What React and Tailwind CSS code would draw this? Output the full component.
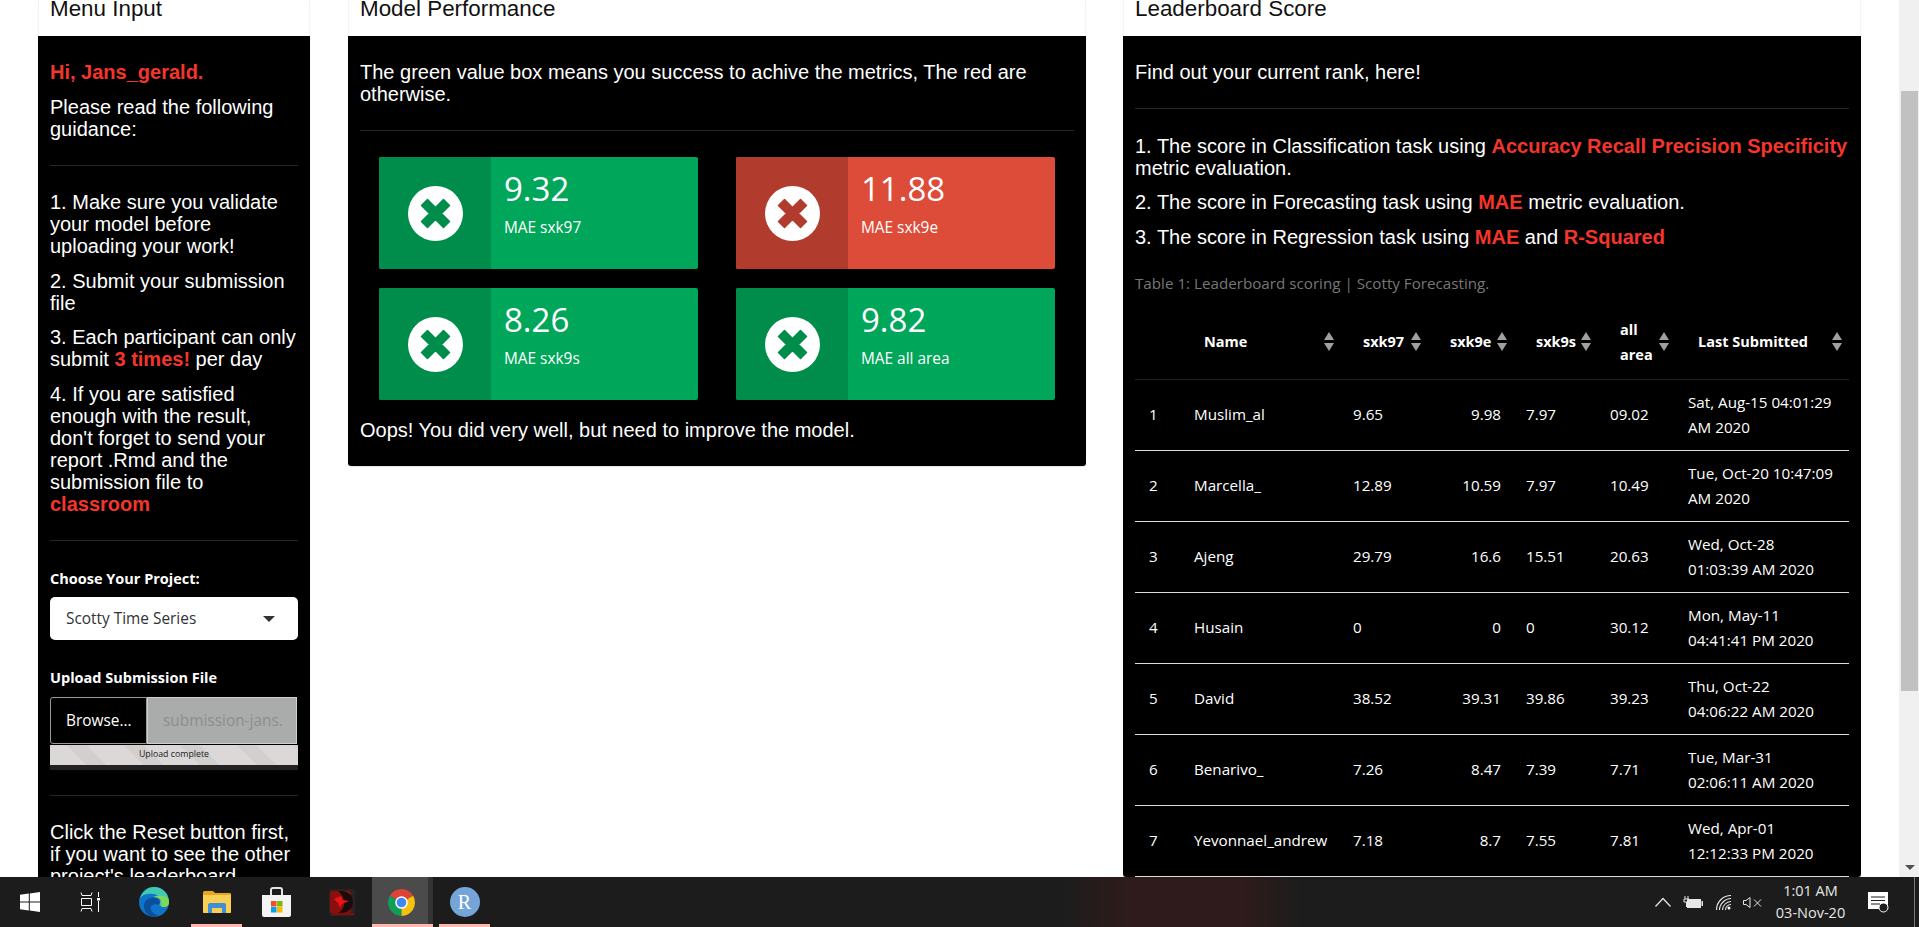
import React from "react";

const sans = "font-['Liberation_Sans',Arial,sans-serif]";
const open = "font-['Open_Sans',sans-serif]";

const rows = [
  ["1", "Muslim_al", "9.65", "9.98", "7.97", "09.02", "Sat, Aug-15 04:01:29", "AM 2020"],
  ["2", "Marcella_", "12.89", "10.59", "7.97", "10.49", "Tue, Oct-20 10:47:09", "AM 2020"],
  ["3", "Ajeng", "29.79", "16.6", "15.51", "20.63", "Wed, Oct-28", "01:03:39 AM 2020"],
  ["4", "Husain", "0", "0", "0", "30.12", "Mon, May-11", "04:41:41 PM 2020"],
  ["5", "David", "38.52", "39.31", "39.86", "39.23", "Thu, Oct-22", "04:06:22 AM 2020"],
  ["6", "Benarivo_", "7.26", "8.47", "7.39", "7.71", "Tue, Mar-31", "02:06:11 AM 2020"],
  ["7", "Yevonnael_andrew", "7.18", "8.7", "7.55", "7.81", "Wed, Apr-01", "12:12:33 PM 2020"],
];

function Red({ children }) {
  return <b className="font-bold text-[#f4352b]">{children}</b>;
}

function Divider({ className }) {
  return <hr className={`border-0 border-t border-[#262626] ${className}`} />;
}

function Panel({ title, className, children }) {
  return (
    <section className={`shrink-0 self-start rounded-b-[3px] shadow-[0_1px_1px_rgba(0,0,0,0.1)] ${className}`}>
      <div className={`h-9 overflow-hidden border-x border-[#f4f4f4] px-[11px] text-[22.4px] leading-[22px] text-[#111] ${sans}`}>
        <h3 className="-mt-[2px] font-normal">{title}</h3>
      </div>
      <div className={`rounded-b-[3px] bg-black px-3 pt-[25px] text-[20px] leading-[22px] text-white ${sans}`}>
        {children}
      </div>
    </section>
  );
}

function CrossIcon() {
  return (
    <svg viewBox="0 0 55 55" className="h-[55px] w-[55px]">
      <circle cx="27.5" cy="27.5" r="27.5" fill="#fff" />
      <path d="M19.5 13.5 27.5 21.5 35.5 13.5 41.5 19.5 33.5 27.5 41.5 35.5 35.5 41.5 27.5 33.5 19.5 41.5 13.5 35.5 21.5 27.5 13.5 19.5Z" fill="currentColor" stroke="currentColor" strokeWidth="1.5" strokeLinejoin="round" />
    </svg>
  );
}

function ValueBox({ value, label, red }) {
  return (
    <div className={`flex h-28 overflow-hidden rounded-[2px] text-white ${open} ${red ? "bg-[#dd4b39]" : "bg-[#00a65a]"}`}>
      <div className={`flex w-28 items-center justify-center ${red ? "bg-[#b13c2e] text-[#b13c2e]" : "bg-[#008d4c] text-[#008d4c]"}`}>
        <CrossIcon />
      </div>
      <div className="pl-[13px] pt-[14px]">
        <div className="text-[33px] leading-[36px]">{value}</div>
        <div className="mt-[11px] text-[15.4px] leading-5">{label}</div>
      </div>
    </div>
  );
}

function SortIcon() {
  return (
    <svg viewBox="0 0 10 19" className="h-[19px] w-[10px] shrink-0" fill="#a0a0a0">
      <path d="M5 0 10 8H0Z" />
      <path d="M5 19 0 11H10Z" />
    </svg>
  );
}

function Th({ children, last }) {
  return (
    <th className="p-0 font-bold">
      <div className={`flex items-center justify-between pl-[24px] text-left text-[14.5px] ${last ? "pr-[7px]" : "pr-[5px]"}`}>
        <span>{children}</span>
        <SortIcon />
      </div>
    </th>
  );
}

function LeftPanel() {
  return (
    <Panel title="Menu Input" className="w-[272px]">
      <p className="font-bold text-[#f4352b]">Hi, Jans_gerald.</p>
      <p className="mt-[13px]">Please read the following guidance:</p>
      <Divider className="mb-[25px] mt-[25px]" />
      <p>1. Make sure you validate your model before uploading your work!</p>
      <p className="mt-[13px]">2. Submit your submission file</p>
      <p className="mt-[12px]">3. Each participant can only submit <Red>3 times!</Red> per day</p>
      <p className="mt-[13px]">
        4. If you are satisfied enough with the result, don't forget to send your report .Rmd and the submission file to <Red>classroom</Red>
      </p>
      <Divider className="mb-[28px] mt-[25px]" />
      <label className={`block text-[14.5px] font-bold leading-5 ${open}`}>Choose Your Project:</label>
      <div className={`mt-[8px] flex h-[43px] items-center justify-between rounded-[5px] bg-white pl-[16px] pr-[23px] text-[15.4px] text-[#333] ${open}`}>
        <span>Scotty Time Series</span>
        <span className="h-0 w-0 border-x-[6px] border-t-[6px] border-x-transparent border-t-[#333]" />
      </div>
      <label className={`mt-[28px] block text-[14.5px] font-bold leading-5 ${open}`}>Upload Submission File</label>
      <div className={`mt-[9px] flex h-[47px] w-[247px] text-[15.4px] ${open}`}>
        <div className="flex w-[97px] items-center rounded-l-[3px] border border-[#9a9a9a] bg-black pl-[15px]">Browse...</div>
        <div className="flex min-w-0 flex-1 items-center overflow-hidden whitespace-nowrap border border-[#cfcfcf] bg-[#aaacab] pl-[15px] text-[#8d8d8d]">submission-jans.</div>
      </div>
      <div className="mt-px h-[25px] bg-[#222]">
        <div className={`h-5 bg-[#dcd8d8] bg-[repeating-linear-gradient(45deg,#dcd8d8_0,#dcd8d8_26px,#d3cfcf_26px,#d3cfcf_40px)] text-center text-[8.8px] leading-[18px] text-[#222] ${open}`}>
          Upload complete
        </div>
      </div>
      <Divider className="mb-[25px] mt-[25px]" />
      <p>Click the Reset button first, if you want to see the other project's leaderboard</p>
      <div className="h-10" />
    </Panel>
  );
}

function MiddlePanel() {
  return (
    <Panel title="Model Performance" className="w-[738px]">
      <p>The green value box means you success to achive the metrics, The red are otherwise.</p>
      <Divider className="mt-[25px]" />
      <div className="grid grid-cols-2 gap-x-[38px] gap-y-[19px] px-[19px] pt-[26px]">
        <ValueBox value="9.32" label="MAE sxk97" />
        <ValueBox value="11.88" label="MAE sxk9e" red />
        <ValueBox value="8.26" label="MAE sxk9s" />
        <ValueBox value="9.82" label="MAE all area" />
      </div>
      <p className="pb-[25px] pt-[19px]">Oops! You did very well, but need to improve the model.</p>
    </Panel>
  );
}

function RightPanel() {
  return (
    <Panel title="Leaderboard Score" className="-ml-px w-[738px]">
      <p>Find out your current rank, here!</p>
      <Divider className="mb-[26px] mt-[25px]" />
      <p>1. The score in Classification task using <Red>Accuracy Recall Precision Specificity</Red> metric evaluation.</p>
      <p className="mt-[12px]">2. The score in Forecasting task using <Red>MAE</Red> metric evaluation.</p>
      <p className="mt-[13px]">3. The score in Regression task using <Red>MAE</Red> and <Red>R-Squared</Red></p>
      <p className={`mt-[25px] text-[15.2px] leading-5 text-[#777] ${open}`}>Table 1: Leaderboard scoring | Scotty Forecasting.</p>
      <table className={`mt-[12px] w-[714px] table-fixed border-collapse text-[15.2px] leading-[25px] ${open}`}>
        <colgroup>
          <col className="w-[45px]" />
          <col className="w-[159px]" />
          <col className="w-[87px]" />
          <col className="w-[86px]" />
          <col className="w-[84px]" />
          <col className="w-[78px]" />
          <col className="w-[175px]" />
        </colgroup>
        <thead>
          <tr className="h-[74px] border-b border-[#222]">
            <th />
            <Th>Name</Th>
            <Th>sxk97</Th>
            <Th>sxk9e</Th>
            <Th>sxk9s</Th>
            <Th>all<br />area</Th>
            <Th last>Last Submitted</Th>
          </tr>
        </thead>
        <tbody>
          {rows.map((r) => (
            <tr key={r[0]} className="h-[71px] border-b border-[#ddd]">
              <td className="px-[14px]">{r[0]}</td>
              <td className="whitespace-nowrap px-[14px]">{r[1]}</td>
              <td className="px-[14px]">{r[2]}</td>
              <td className="pl-[14px] pr-[11px] text-right">{r[3]}</td>
              <td className="px-[14px]">{r[4]}</td>
              <td className="px-[14px]">{r[5]}</td>
              <td className="whitespace-nowrap pl-[14px]">{r[6]}<br />{r[7]}</td>
            </tr>
          ))}
        </tbody>
      </table>
    </Panel>
  );
}

function Scrollbar() {
  return (
    <div className="flex w-5 shrink-0 flex-col bg-[#f0f0f0]">
      <div className="ml-[2px] mt-[91px] h-[600px] w-[17px] bg-[#c1c1c1]" />
      <div className="mb-[7px] ml-[6px] mt-auto h-0 w-0 border-x-[5px] border-t-[5px] border-x-transparent border-t-[#505050]" />
    </div>
  );
}

function Slot({ width, active, bar, className = "", children }) {
  return (
    <div className={`relative flex h-full shrink-0 items-center justify-center ${active ? "bg-[#4b4b4b]" : ""} ${className}`} style={{ width }}>
      {children}
      {bar && <span className="absolute inset-x-0 bottom-0 h-[3px] bg-[#ffb8b0]" />}
    </div>
  );
}

function WindowsLogo() {
  return (
    <svg viewBox="0 0 20 20" className="h-5 w-5" fill="#fff">
      <path d="M0 2.8 8.8 1.6V9.5H0ZM9.8 1.4 20 0V9.5H9.8ZM0 10.5H8.8V18.4L0 17.2ZM9.8 10.5H20V20L9.8 18.6Z" />
    </svg>
  );
}

function TaskView() {
  return (
    <svg viewBox="0 0 20 20" className="h-5 w-5" fill="none" stroke="#fff" strokeWidth="1">
      <path d="M1 .5 2 3.5H11L12 .5M1.5 6.5H11.5V13.5H1.5ZM1 19.5 2 16.5H11L12 19.5M18.5 0V5M18.5 9V20" />
      <rect x="17" y="6" width="3" height="2.5" fill="#fff" stroke="none" />
    </svg>
  );
}

function EdgeIcon() {
  return (
    <svg viewBox="0 0 30 30" className="h-[30px] w-[30px]">
      <circle cx="15" cy="15" r="15" fill="#0f74c9" />
      <path d="M1 11C4 3 10 0 15 0 23 0 30 6 30 15 30 19 26 20 22 19 18 18 23 15 21 11 18 6 6 5 1 11Z" fill="#3fc9b0" />
      <path d="M15 11C20 11 22 15 20 18 16 16 10 18 12 23 13 26 17 28 20 29 12 32 5 27 5 19 5 14 10 10 15 11Z" fill="#0b4f9c" />
      <path d="M30 15C30 20 26 21 22 19.500 25 15 20 9 14 10 19 8 30 8 30 15Z" fill="#7fd857" />
    </svg>
  );
}

function FolderIcon() {
  return (
    <svg viewBox="0 0 28 23" className="h-[23px] w-[28px]">
      <path d="M0 1.500Q0 0 1.500 0H10L12 2H27Q28 2 28 3V21Q28 22 27 22H1Q0 22 0 21Z" fill="#e8a618" />
      <path d="M0 4H28V21Q28 22 27 22H1Q0 22 0 21Z" fill="#f9cf55" />
      <path d="M5 22V14Q5 12 7 12H21Q23 12 23 14V22H19V17H9V22Z" fill="#3d8fd6" />
    </svg>
  );
}

function StoreIcon() {
  return (
    <svg viewBox="0 0 29 30" className="h-[30px] w-[29px]">
      <path d="M9 8V3Q9 1 11 1H18Q20 1 20 3V8" fill="none" stroke="#e4e4e4" strokeWidth="2" />
      <path d="M0 8H29V28Q29 30 27 30H2Q0 30 0 28Z" fill="#f4f4f4" />
      <rect x="9" y="14" width="5.500" height="5.500" fill="#f25022" />
      <rect x="15" y="14" width="5.500" height="5.500" fill="#7fba00" />
      <rect x="9" y="20" width="5.500" height="5.500" fill="#00a4ef" />
      <rect x="15" y="20" width="5.500" height="5.500" fill="#ffb900" />
    </svg>
  );
}

function RedApp() {
  return (
    <svg viewBox="0 0 26 27" className="h-[27px] w-[26px]">
      <rect width="26" height="27" rx="3" fill="#2b2222" />
      <rect x="1" y="2" width="21" height="22" rx="2" fill="#8c0f0f" />
      <path d="M9 2H14Q24 4 24 13 24 22 14 24H9Q16 20 15 13 14 6 9 2Z" fill="#1c0b0b" />
      <path d="M5 10 12 7 14 11 20 12 13 15 11 19 9 14Z" fill="#e81414" />
      <rect x="3" y="24" width="22" height="2" fill="#8a0a0a" />
    </svg>
  );
}

function ChromeIcon() {
  return (
    <svg viewBox="0 0 28 28" className="h-[27px] w-[27px]">
      <path d="M14 14 26.100 7A14 14 0 0 0 1.900 7Z" fill="#db4437" />
      <path d="M14 14 1.900 7A14 14 0 0 0 14 28Z" fill="#0f9d58" />
      <path d="M14 14 14 28A14 14 0 0 0 26.100 7Z" fill="#f4c20d" />
      <circle cx="14" cy="14" r="6.500" fill="#fff" />
      <circle cx="14" cy="14" r="5" fill="#4285f4" />
    </svg>
  );
}

function Tray() {
  return (
    <div className="ml-auto flex h-full items-center text-[#e6e6e6]">
      <svg viewBox="0 0 16 10" className="mr-[12px] h-[10px] w-4" fill="none" stroke="#e6e6e6" strokeWidth="1.200">
        <path d="M.5 9.500 8 1.500 15.500 9.500" />
      </svg>
      <svg viewBox="0 0 20 13" className="mr-[13px] h-[13px] w-5" fill="none" stroke="#e6e6e6">
        <path d="M2 0V3M5 0V3M1 3H6V6H1ZM3.500 6V11" />
        <rect x="4" y="3" width="14" height="9" fill="#e6e6e6" stroke="none" />
        <rect x="18.500" y="5" width="1.500" height="5" fill="#e6e6e6" stroke="none" />
      </svg>
      <svg viewBox="0 0 15 15" className="mr-[12px] h-[15px] w-[15px]" fill="none" stroke="#e6e6e6" strokeWidth="1.100">
        <path d="M.5 15C.5 7 7 .5 15 .5M3.500 15C3.500 9 9 3.500 15 3.500M6.500 15C6.500 11 10 6.500 15 6.500M9.500 15C9.500 12 12 9.500 15 9.500" />
        <circle cx="13" cy="13" r="1.500" fill="#fff" stroke="none" />
      </svg>
      <svg viewBox="0 0 19 11" className="mr-[13px] h-[11px] w-[19px]" fill="none" stroke="#e6e6e6" strokeWidth="1">
        <path d="M.5 3.500H3L7 .5V10.500L3 7.500H.5ZM11 2.500 18 9.500M18 2.500 11 9.500" />
      </svg>
      <div className={`w-[71px] whitespace-nowrap text-center text-[14.5px] leading-[22px] ${open}`}>
        <div>1:01 AM</div>
        <div>03-Nov-20</div>
      </div>
      <svg viewBox="0 0 21 21" className="ml-[22px] mr-[25px] h-[21px] w-[21px]">
        <path d="M0 0H20V17H0Z" fill="#fff" />
        <path d="M3 5H17M3 8.500H17M3 12H12" stroke="#1c1c1c" />
        <circle cx="15.500" cy="15.500" r="4.500" fill="#1c1c1c" stroke="#fff" />
      </svg>
      <div className="h-full w-px bg-[#777]" />
      <div className="w-[4px]" />
    </div>
  );
}

function Taskbar() {
  return (
    <div className="flex h-[50px] shrink-0 bg-[#1c1c1c] bg-[linear-gradient(90deg,#1c1c1c_1060px,#2f1b1b_1130px,#2f1b1b_1240px,#1c1c1c_1305px)]">
      <Slot width={60}><WindowsLogo /></Slot>
      <Slot width={60}><TaskView /></Slot>
      <Slot width={68}><EdgeIcon /></Slot>
      <Slot width={51} bar className="ml-[3px]"><FolderIcon /></Slot>
      <Slot width={69}><StoreIcon /></Slot>
      <Slot width={61}><RedApp /></Slot>
      <Slot width={61} active bar>
        <span className="mr-[3px]"><ChromeIcon /></span>
        <span className="absolute inset-y-0 right-0 w-[5px] bg-[#333]" />
      </Slot>
      <Slot width={51} bar className="ml-[6px]">
        <span className="flex h-[30px] w-[30px] items-center justify-center rounded-full bg-[#75a5d8] font-['Liberation_Serif',serif] text-[20px] text-white">R</span>
      </Slot>
      <Tray />
    </div>
  );
}

export default function App() {
  return (
    <div className="flex h-screen flex-col overflow-hidden bg-white">
      <div className="flex min-h-0 flex-1">
        <main className="flex min-w-0 flex-1 gap-[38px] overflow-hidden pl-[38px]">
          <LeftPanel />
          <MiddlePanel />
          <RightPanel />
        </main>
        <Scrollbar />
      </div>
      <Taskbar />
    </div>
  );
}
